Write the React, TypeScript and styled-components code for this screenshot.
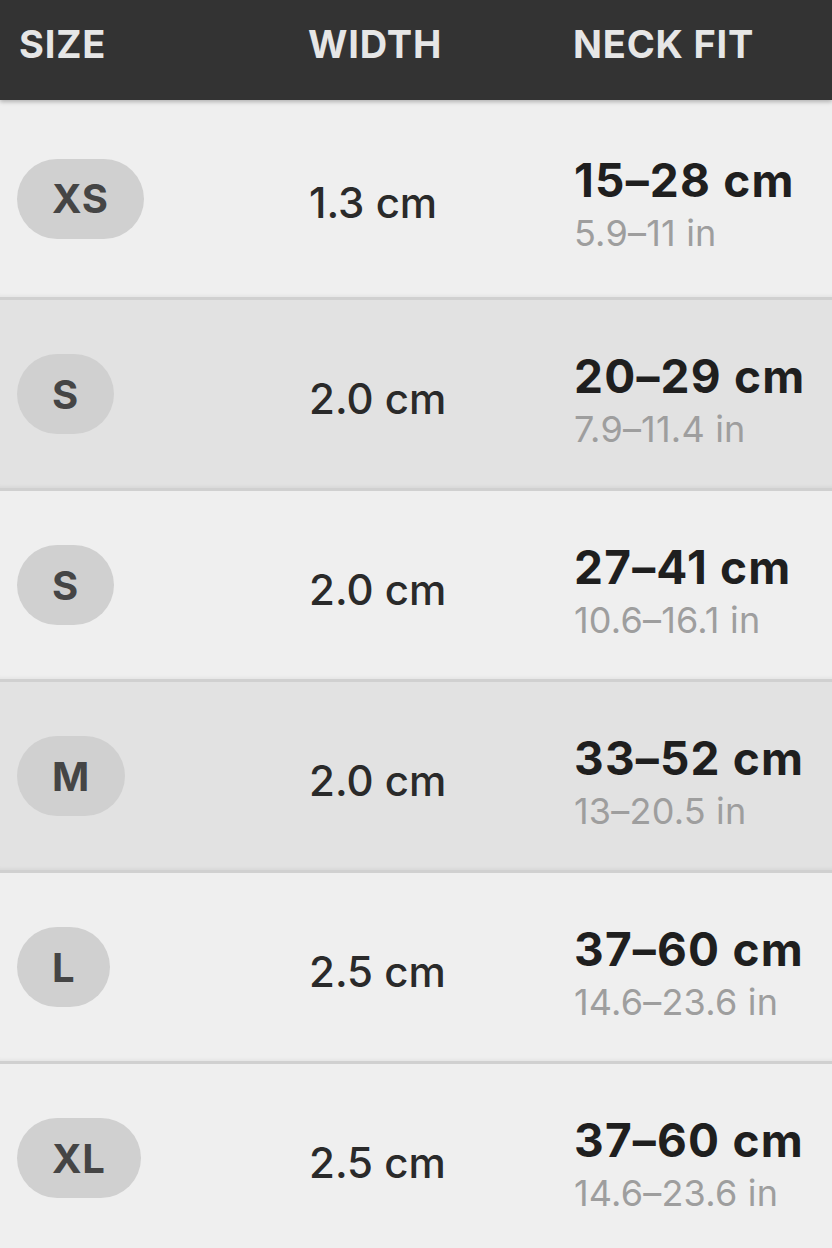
import React from "react";
import styled, { createGlobalStyle } from "styled-components";

const Global = createGlobalStyle`
  html, body { margin: 0; padding: 0; background: #efefef; }
  body { font-family: Inter, "Noto Sans", sans-serif; -webkit-font-smoothing: antialiased; }
`;

const Table = styled.div`
  width: 832px;
  height: 1248px;
  overflow: hidden;
  display: flex;
  flex-direction: column;
  background: #efefef;
`;

const Header = styled.div`
  position: relative;
  z-index: 1;
  height: 100px;
  flex: none;
  display: grid;
  grid-template-columns: 289px 265px 1fr;
  align-items: center;
  padding: 0 0 12px 19px;
  box-sizing: border-box;
  background: #333333;
  box-shadow: 0 2px 4px rgba(0, 0, 0, 0.25);
`;

const HeadCell = styled.div`
  font-family: Inter, sans-serif;
  font-weight: 700;
  font-size: 38px;
  letter-spacing: 0.8px;
  color: #e6e6e6;
  line-height: 1;
`;

const Row = styled.div<{ $shade: "light" | "dark"; $first?: boolean }>`
  height: ${(p) => (p.$first ? 200 : 191)}px;
  flex: none;
  box-sizing: border-box;
  display: grid;
  grid-template-columns: 292px 265px 1fr;
  align-items: center;
  padding-left: 17px;
  background: ${(p) => (p.$shade === "dark" ? "#e2e2e2" : "#efefef")};
  border-bottom: 3px solid #d0d0d0;
  box-shadow: inset 0 -5px 4px -4px rgba(0, 0, 0, 0.06);
`;

const SizeCell = styled.div`
  display: flex;
  align-items: center;
`;

const Pill = styled.span`
  display: inline-flex;
  align-items: center;
  justify-content: center;
  height: 80px;
  padding: 0 35px;
  border-radius: 40px;
  background: #d0d0d0;
  color: #454545;
  font-weight: 700;
  font-size: 40px;
  letter-spacing: 0.8px;
`;

const WidthCell = styled.div`
  font-weight: 500;
  font-size: 42px;
  color: #2a2a2a;
  letter-spacing: 0;
  padding-top: 8px;
`;

const NeckCell = styled.div`
  display: flex;
  flex-direction: column;
  gap: 12px;
  padding-top: 11px;
`;

const NeckMain = styled.div`
  font-weight: 700;
  font-size: 46px;
  line-height: 1;
  color: #1f1f1f;
  letter-spacing: 1.2px;
`;

const NeckSub = styled.div`
  font-weight: 400;
  font-size: 36px;
  line-height: 1;
  color: #9e9e9e;
  letter-spacing: 0.2px;
`;

type Item = { size: string; width: string; cm: string; inch: string; shade: "light" | "dark" };

const rows: Item[] = [
  { size: "XS", width: "1.3 cm", cm: "15–28 cm", inch: "5.9–11 in", shade: "light" },
  { size: "S", width: "2.0 cm", cm: "20–29 cm", inch: "7.9–11.4 in", shade: "dark" },
  { size: "S", width: "2.0 cm", cm: "27–41 cm", inch: "10.6–16.1 in", shade: "light" },
  { size: "M", width: "2.0 cm", cm: "33–52 cm", inch: "13–20.5 in", shade: "dark" },
  { size: "L", width: "2.5 cm", cm: "37–60 cm", inch: "14.6–23.6 in", shade: "light" },
  { size: "XL", width: "2.5 cm", cm: "37–60 cm", inch: "14.6–23.6 in", shade: "light" },
];

export default function App() {
  return (
    <>
      <Global />
      <Table>
        <Header>
          <HeadCell>SIZE</HeadCell>
          <HeadCell>WIDTH</HeadCell>
          <HeadCell>NECK FIT</HeadCell>
        </Header>
        {rows.map((r, i) => (
          <Row key={i} $shade={r.shade} $first={i === 0}>
            <SizeCell>
              <Pill>{r.size}</Pill>
            </SizeCell>
            <WidthCell>{r.width}</WidthCell>
            <NeckCell>
              <NeckMain>{r.cm}</NeckMain>
              <NeckSub>{r.inch}</NeckSub>
            </NeckCell>
          </Row>
        ))}
      </Table>
    </>
  );
}
